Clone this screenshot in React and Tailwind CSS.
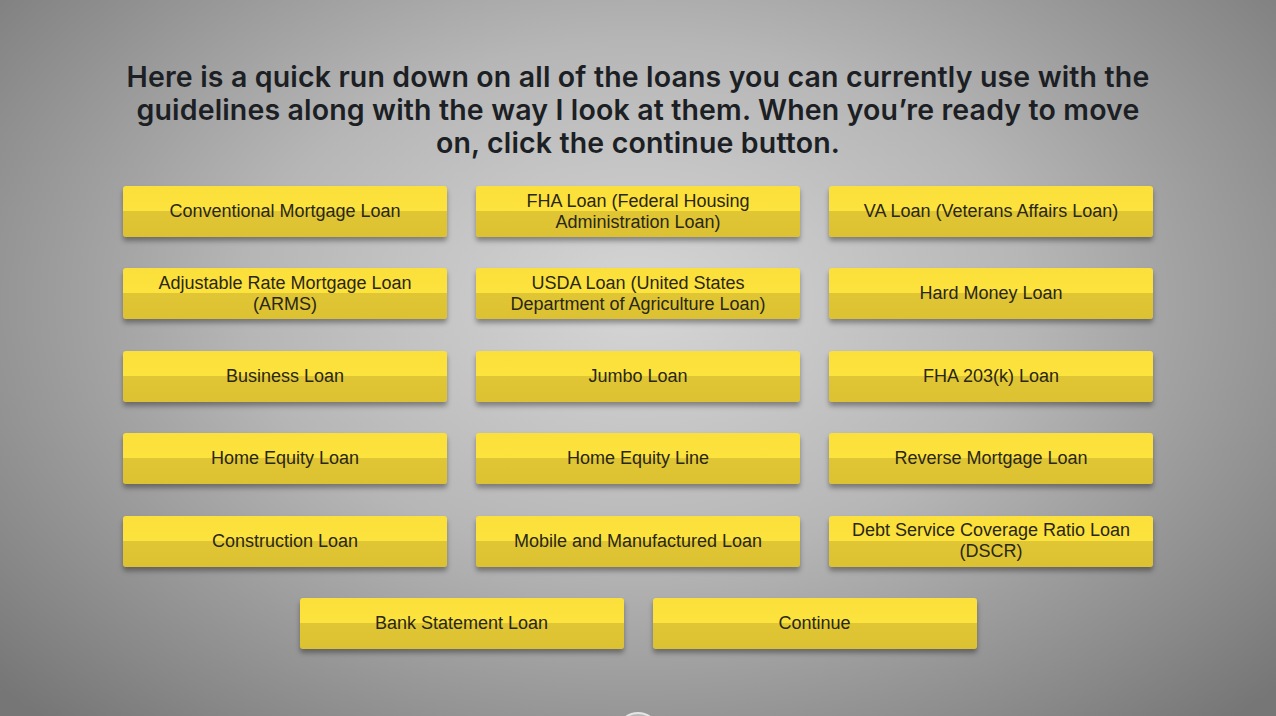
const loans = [
  ['Conventional Mortgage Loan'],
  ['FHA Loan (Federal Housing', 'Administration Loan)'],
  ['VA Loan (Veterans Affairs Loan)'],
  ['Adjustable Rate Mortgage Loan', '(ARMS)'],
  ['USDA Loan (United States', 'Department of Agriculture Loan)'],
  ['Hard Money Loan'],
  ['Business Loan'],
  ['Jumbo Loan'],
  ['FHA 203(k) Loan'],
  ['Home Equity Loan'],
  ['Home Equity Line'],
  ['Reverse Mortgage Loan'],
  ['Construction Loan'],
  ['Mobile and Manufactured Loan'],
  ['Debt Service Coverage Ratio Loan', '(DSCR)'],
];

function LoanButton({ lines }) {
  return (
    <button className="w-[324px] h-[51px] rounded-[3px] overflow-hidden shadow-[0_4px_5px_rgba(0,0,0,0.35)] bg-[linear-gradient(to_bottom,#fbdf3a_0%,#fde33d_50%,#e0c634_50%,#dcc232_100%)] text-[#2a2716] text-[18px] leading-[21px] font-['Liberation_Sans',Arial,sans-serif] flex flex-col items-center justify-center">
      {lines.map((l) => (
        <span key={l}>{l}</span>
      ))}
    </button>
  );
}

export default function App() {
  return (
    <div className="w-[1276px] h-[716px] overflow-hidden bg-[radial-gradient(ellipse_68%_80%_at_50%_42%,#d6d6d6_0%,#b6b6b6_45%,#888888_85%,#767676_100%)] flex flex-col items-center">
      <h1 className="mt-[60px] text-center text-[28.5px] leading-[33px] font-semibold text-[#1c1f24] font-['Inter','Liberation_Sans',sans-serif] tracking-[0.15px]">
        Here is a quick run down on all of the loans you can currently use with the
        <br />
        guidelines along with the way I look at them. When you’re ready to move
        <br />
        on, click the continue button.
      </h1>
      <div className="mt-[27px] grid grid-cols-[324px_324px_324px] gap-x-[29px] gap-y-[31.4px]">
        {loans.map((lines) => (
          <LoanButton key={lines[0]} lines={lines} />
        ))}
      </div>
      <div className="mt-[31.4px] flex gap-[29px]">
        <LoanButton lines={['Bank Statement Loan']} />
        <LoanButton lines={['Continue']} />
      </div>
      <div className="mt-[63px] w-[44px] h-[44px] shrink-0 rounded-full border-2 border-[#e4e4e4] bg-[#b8b8b8]" />
    </div>
  );
}
